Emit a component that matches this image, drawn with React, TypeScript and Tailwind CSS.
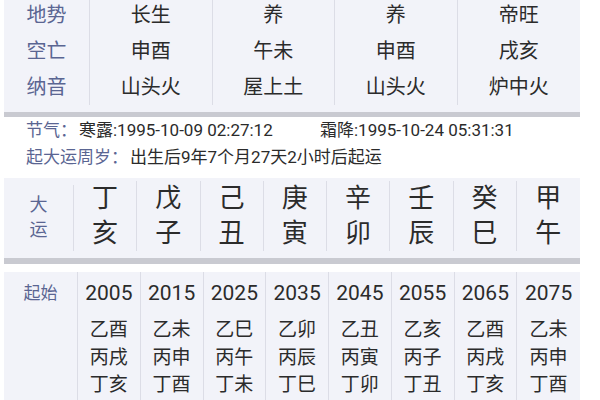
import React from "react";

const font = { fontFamily: 'Roboto, "Noto Sans CJK SC", "Noto Sans", sans-serif' };

const topRows = [
  { label: "地势", values: ["长生", "养", "养", "帝旺"] },
  { label: "空亡", values: ["申酉", "午未", "申酉", "戌亥"] },
  { label: "纳音", values: ["山头火", "屋上土", "山头火", "炉中火"] },
];

const dayun = [
  ["丁", "亥"],
  ["戊", "子"],
  ["己", "丑"],
  ["庚", "寅"],
  ["辛", "卯"],
  ["壬", "辰"],
  ["癸", "巳"],
  ["甲", "午"],
];

const years = [
  { year: "2005", gz: ["乙酉", "丙戌", "丁亥"] },
  { year: "2015", gz: ["乙未", "丙申", "丁酉"] },
  { year: "2025", gz: ["乙巳", "丙午", "丁未"] },
  { year: "2035", gz: ["乙卯", "丙辰", "丁巳"] },
  { year: "2045", gz: ["乙丑", "丙寅", "丁卯"] },
  { year: "2055", gz: ["乙亥", "丙子", "丁丑"] },
  { year: "2065", gz: ["乙酉", "丙戌", "丁亥"] },
  { year: "2075", gz: ["乙未", "丙申", "丁酉"] },
];

export default function App() {
  return (
    <div className="w-[600px] h-[400px] overflow-hidden bg-white" style={font}>
      <div className="ml-[4px] w-[576px]">
        {/* top panel */}
        <div className="bg-[#f2f3f9] border-b-[5px] border-[#c9cad1] pb-[7px]">
          <div className="grid grid-cols-[86px_repeat(4,1fr)] -mt-[3px]">
            <div className="flex flex-col border-r border-[#dcdde6]">
              {topRows.map((r) => (
                <div
                  key={r.label}
                  className="h-[36px] leading-[36px] text-center text-[20px] text-[#5a6592]"
                >
                  {r.label}
                </div>
              ))}
            </div>
            {[0, 1, 2, 3].map((c) => (
              <div
                key={c}
                className={`flex flex-col ${c < 3 ? "border-r border-[#dcdde6]" : ""}`}
              >
                {topRows.map((r) => (
                  <div
                    key={r.label}
                    className="h-[36px] leading-[36px] text-center text-[20px] text-[#2b2b2b]"
                  >
                    {r.values[c]}
                  </div>
                ))}
              </div>
            ))}
          </div>
        </div>

        {/* jieqi */}
        <div className="pl-[22px] pb-[7px] text-[17px] leading-[27px] text-[#2b2b2b]">
          <div className="flex">
            <div className="w-[294px]">
              <span className="text-[#5a6592]">节气：</span>
              <span className="ml-[2px]">寒露:1995-10-09 02:27:12</span>
            </div>
            <span>霜降:1995-10-24 05:31:31</span>
          </div>
          <div>
            <span className="text-[#5a6592]">起大运周岁：</span>
            <span className="ml-[2px]">出生后9年7个月27天2小时后起运</span>
          </div>
        </div>

        {/* dayun panel */}
        <div className="bg-[#f2f3f9] border-b-[6px] border-[#c9cad1] h-[86px]">
          <div className="grid grid-cols-[70px_repeat(8,1fr)] h-[80px] py-[7px]">
            <div className="flex flex-col items-center justify-center border-r border-[#dcdde6] text-[18px] leading-[25px] text-[#5a6592] pb-[2px]">
              <span>大</span>
              <span>运</span>
            </div>
            {dayun.map((d, i) => (
              <div
                key={i}
                className={`flex flex-col items-center -mt-[4px] text-[26px] leading-[35px] text-[#2b2b2b] ${
                  i < 7 ? "border-r border-[#dcdde6]" : ""
                }`}
              >
                <span>{d[0]}</span>
                <span>{d[1]}</span>
              </div>
            ))}
          </div>
        </div>

        {/* qishi panel */}
        <div className="mt-[8px] bg-[#f2f3f9] h-[140px]">
          <div className="grid grid-cols-[74px_repeat(8,1fr)] h-full">
            <div className="border-r border-[#dcdde6] pt-[7px] text-center text-[17px] leading-[28px] text-[#5a6592]">
              起始
            </div>
            {years.map((y, i) => (
              <div
                key={y.year}
                className={`flex flex-col items-center pt-[7px] text-[#2b2b2b] ${
                  i < 7 ? "border-r border-[#dcdde6]" : ""
                }`}
              >
                <span className="text-[21px] leading-[28px]">{y.year}</span>
                <div className="mt-[9px] flex flex-col items-center text-[19px] leading-[27.5px]">
                  {y.gz.map((g) => (
                    <span key={g}>{g}</span>
                  ))}
                </div>
              </div>
            ))}
          </div>
        </div>
      </div>
    </div>
  );
}
